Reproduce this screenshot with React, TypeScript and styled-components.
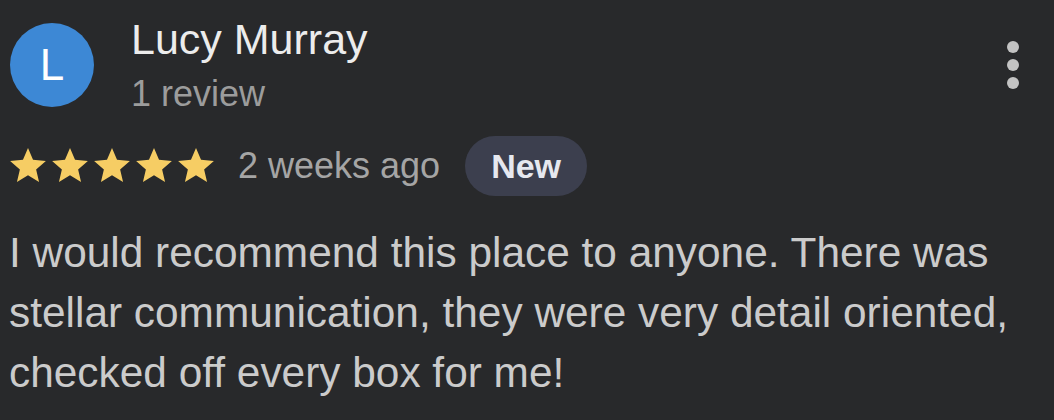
import React from "react";
import styled, { createGlobalStyle } from "styled-components";

const GlobalStyle = createGlobalStyle`
  html, body {
    margin: 0;
    padding: 0;
    background: #28292b;
  }
  body {
    font-family: "Liberation Sans", Arial, Helvetica, sans-serif;
  }
`;

const Page = styled.div`
  width: 1054px;
  height: 420px;
  box-sizing: border-box;
  padding: 15px 35px 0 10px;
  background: #28292b;
  overflow: hidden;
`;

const Header = styled.div`
  display: flex;
  align-items: center;
`;

const Avatar = styled.div`
  width: 84px;
  height: 84px;
  border-radius: 50%;
  background: #3d88d5;
  color: #ffffff;
  font-size: 44px;
  line-height: 1;
  display: flex;
  align-items: center;
  justify-content: center;
  flex-shrink: 0;
`;

const Author = styled.div`
  display: flex;
  flex-direction: column;
  margin-left: 37px;
  flex: 1;
`;

const Name = styled.div`
  font-size: 43px;
  line-height: 48px;
  color: #ececec;
`;

const Meta = styled.div`
  font-size: 36px;
  line-height: 40px;
  color: #9c9c9c;
  margin-top: 11px;
`;

const MoreButton = styled.div`
  display: flex;
  flex-direction: column;
  gap: 6px;
`;

const Dot = styled.span`
  display: block;
  width: 12px;
  height: 12px;
  border-radius: 50%;
  background: #c3c3c3;
`;

const RatingRow = styled.div`
  display: flex;
  align-items: center;
  margin-top: 22px;
  height: 60px;
`;

const Stars = styled.div`
  display: flex;
  gap: 6px;
  margin-bottom: 3px;
`;

const Time = styled.span`
  font-size: 36px;
  color: #a5a5a5;
  margin-left: 24px;
`;

const Badge = styled.span`
  margin-left: 25px;
  height: 60px;
  padding: 0 26px;
  border-radius: 30px;
  background: #3c3f4e;
  color: #e6e8ef;
  font-size: 34px;
  font-weight: 700;
  display: flex;
  align-items: center;
`;

const Body = styled.p`
  margin: 27px 0 0 -1px;
  font-size: 42.4px;
  line-height: 60px;
  color: #cbcbcb;
`;

const Star = () => (
  <svg width="36" height="34" viewBox="2 2 20 19" aria-hidden="true">
    <path
      fill="#f6cd64"
      d="M12 17.27L18.18 21l-1.64-7.03L22 9.24l-7.19-.61L12 2 9.19 8.63 2 9.24l5.46 4.73L5.82 21z"
    />
  </svg>
);

export default function App() {
  return (
    <>
      <GlobalStyle />
      <Page>
        <Header>
          <Avatar>L</Avatar>
          <Author>
            <Name>Lucy Murray</Name>
            <Meta>1 review</Meta>
          </Author>
          <MoreButton>
            <Dot />
            <Dot />
            <Dot />
          </MoreButton>
        </Header>
        <RatingRow>
          <Stars>
            {[0, 1, 2, 3, 4].map((i) => (
              <Star key={i} />
            ))}
          </Stars>
          <Time>2 weeks ago</Time>
          <Badge>New</Badge>
        </RatingRow>
        <Body>
          I would recommend this place to anyone. There was stellar
          communication, they were very detail oriented, checked off every box
          for me!
        </Body>
      </Page>
    </>
  );
}
